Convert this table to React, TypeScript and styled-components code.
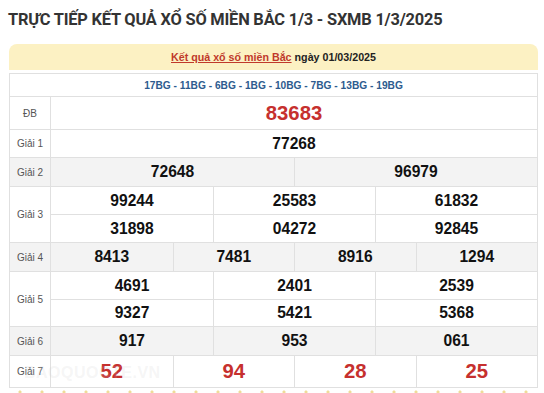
import styled, { createGlobalStyle } from 'styled-components'

const GlobalStyle = createGlobalStyle`
  html, body {
    margin: 0;
    padding: 0;
    background: #fff;
  }
  body {
    font-family: "Liberation Sans", Arial, sans-serif;
  }
`

const Page = styled.div`
  width: 544px;
  height: 393px;
  overflow: hidden;
  box-sizing: border-box;
  padding: 9px 0 0 8px;
`

const Title = styled.h1`
  margin: 0 0 14px;
  font-family: Roboto, "Liberation Sans", sans-serif;
  font-weight: 700;
  font-size: 16.4px;
  letter-spacing: -0.2px;
  line-height: 21px;
  color: #333;
  white-space: nowrap;
`

const Box = styled.div`
  width: 529px;
  margin-left: 1px;
`

const Caption = styled.div`
  height: 26px;
  display: flex;
  align-items: center;
  justify-content: center;
  gap: 3px;
  background: #fcf1c3;
  border-radius: 8px 8px 0 0;
  font-size: 10.7px;
  font-weight: 700;
  color: #222;
  margin-bottom: 3px;
`

const CaptionLink = styled.a`
  color: #c0392b;
  text-decoration: underline;
`

const Table = styled.div`
  border: 1px solid #e0e0e0;
  border-bottom: none;
`

const Codes = styled.div`
  height: 23px;
  box-sizing: border-box;
  display: flex;
  align-items: center;
  justify-content: center;
  border-bottom: 1px solid #e0e0e0;
  font-size: 10.2px;
  font-weight: 700;
  color: #2d5b8e;
`

const Row = styled.div<{ $shade?: boolean }>`
  position: relative;
  display: grid;
  grid-template-columns: 41px 1fr;
  background: ${({ $shade }) => ($shade ? '#f3f3f3' : '#fff')};
  border-bottom: 1px solid #e0e0e0;
`

const Label = styled.div`
  display: flex;
  align-items: center;
  justify-content: center;
  border-right: 1px solid #e0e0e0;
  font-size: 10px;
  color: #555;
`

const Lines = styled.div`
  display: flex;
  flex-direction: column;
`

const Line = styled.div<{ $cols: number; $h: number }>`
  display: grid;
  grid-template-columns: repeat(${({ $cols }) => $cols}, 1fr);
  height: ${({ $h }) => $h}px;
  & + & {
    border-top: 1px solid #e0e0e0;
  }
`

const Num = styled.div<{ $big?: boolean }>`
  display: flex;
  align-items: center;
  justify-content: center;
  font-weight: 700;
  font-size: ${({ $big }) => ($big ? '20.3px' : '15.6px')};
  color: ${({ $big }) => ($big ? '#c6302e' : '#111')};
  & + & {
    border-left: 1px solid #e0e0e0;
  }
`

const Watermark = styled.span`
  position: absolute;
  left: 14px;
  top: 8px;
  font-size: 16px;
  font-weight: 700;
  letter-spacing: 0.5px;
  color: rgba(200, 200, 200, 0.18);
  pointer-events: none;
`

const Dots = styled.div`
  height: 4px;
  margin-top: 2px;
  background: radial-gradient(circle, #efdc98 1.3px, transparent 1.8px) 0 0 / 22px 4px repeat-x;
`

type Prize = {
  label: string
  lines: string[][]
  heights: number[]
  shade?: boolean
  big?: boolean
}

const prizes: Prize[] = [
  { label: 'ĐB', lines: [['83683']], heights: [32], big: true },
  { label: 'Giải 1', lines: [['77268']], heights: [27] },
  { label: 'Giải 2', lines: [['72648', '96979']], heights: [28], shade: true },
  { label: 'Giải 3', lines: [['99244', '25583', '61832'], ['31898', '04272', '92845']], heights: [27, 27] },
  { label: 'Giải 4', lines: [['8413', '7481', '8916', '1294']], heights: [28], shade: true },
  { label: 'Giải 5', lines: [['4691', '2401', '2539'], ['9327', '5421', '5368']], heights: [27, 26] },
  { label: 'Giải 6', lines: [['917', '953', '061']], heights: [28], shade: true },
  { label: 'Giải 7', lines: [['52', '94', '28', '25']], heights: [31], big: true },
]

export default function App() {
  return (
    <Page>
      <GlobalStyle />
      <Title>TRỰC TIẾP KẾT QUẢ XỔ SỐ MIỀN BẮC 1/3 - SXMB 1/3/2025</Title>
      <Box>
        <Caption>
          <CaptionLink>Kết quả xổ số miền Bắc</CaptionLink>
          <span>ngày 01/03/2025</span>
        </Caption>
        <Table>
          <Codes>17BG - 11BG - 6BG - 1BG - 10BG - 7BG - 13BG - 19BG</Codes>
          {prizes.map((p) => (
            <Row key={p.label} $shade={p.shade}>
              <Label>{p.label}</Label>
              <Lines>
                {p.lines.map((line, i) => (
                  <Line key={i} $cols={line.length} $h={p.heights[i]}>
                    {line.map((n) => (
                      <Num key={n} $big={p.big}>{n}</Num>
                    ))}
                  </Line>
                ))}
              </Lines>
              {p.label === 'Giải 7' && <Watermark>BAOQUOCTE.VN</Watermark>}
            </Row>
          ))}
        </Table>
        <Dots />
      </Box>
    </Page>
  )
}
